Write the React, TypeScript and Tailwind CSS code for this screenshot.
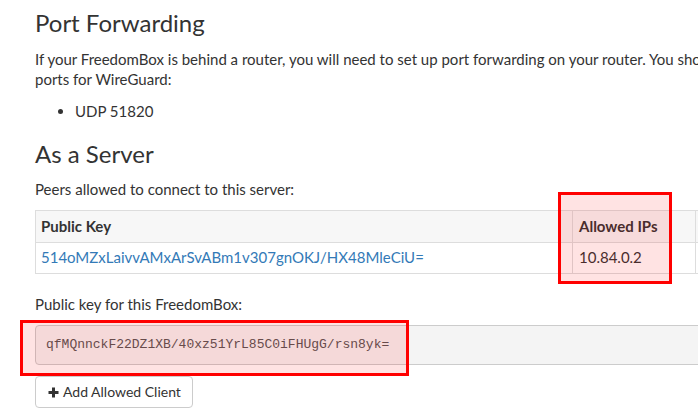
export default function App() {
  return (
    <div className="relative w-[698px] h-[419px] overflow-hidden bg-white text-[#333] font-['Lato','Liberation_Sans',sans-serif] text-[15px] leading-5">
      <div className="w-[1100px] pl-[35px]">
        {/* Port forwarding */}
        <h2 className="mt-[10px] text-[24px] leading-[26px] font-normal">Port Forwarding</h2>
        <p className="mt-[13px] whitespace-nowrap">
          If your FreedomBox is behind a router, you will need to set up port forwarding on your router. You should forward the following
          <br />
          ports for WireGuard:
        </p>
        <ul className="mt-[12px] pl-[40px] list-disc">
          <li>UDP 51820</li>
        </ul>

        {/* Server */}
        <h2 className="mt-[20px] text-[24px] leading-[26px] font-normal">As a Server</h2>
        <p className="mt-[12px]">Peers allowed to connect to this server:</p>
        <table className="mt-[11px] border-collapse border border-[#ddd] w-[900px] table-fixed">
          <thead>
            <tr className="bg-[#f7f7f7]">
              <th className="w-[537px] border border-[#ddd] text-left font-bold pl-[5px] pt-[5px] pb-[6px]">Public Key</th>
              <th className="w-[123px] border border-[#ddd] text-left font-bold pl-[6px] pt-[5px] pb-[6px]">Allowed IPs</th>
              <th className="border border-[#ddd] text-left font-bold pl-[6px] pt-[5px] pb-[6px]">Last Connected Time</th>
            </tr>
          </thead>
          <tbody>
            <tr>
              <td className="border border-[#ddd] pl-[5px] pt-[4px] pb-[6px]">
                <a href="#" className="text-[#337ab7]">514oMZxLaivvAMxArSvABm1v307gnOKJ/HX48MleCiU=</a>
              </td>
              <td className="border border-[#ddd] pl-[6px] pt-[4px] pb-[6px]">10.84.0.2</td>
              <td className="border border-[#ddd] pl-[6px] pt-[4px] pb-[6px]"></td>
            </tr>
          </tbody>
        </table>

        <p className="mt-[20px]">Public key for this FreedomBox:</p>
        <div className="mt-[11px] h-[40px] w-[900px] flex items-center rounded-[4px] border border-[#ccc] bg-[#f4f4f4] pl-[10px] font-['Liberation_Mono',monospace] text-[13px] text-[#555]">
          qfMQnnckF22DZ1XB/40xz51YrL85C0iFHUgG/rsn8yk=
        </div>

        <button className="mt-[11px] h-[32px] w-[158px] flex items-center gap-[4px] pl-[12px] rounded-[4px] border border-[#ccc] bg-white text-[#333] text-[14px]">
          <svg width="11" height="11" viewBox="0 0 11 11" className="shrink-0">
            <path d="M5.5 0.5V10.5M0.5 5.5H10.5" stroke="#333" strokeWidth="3" />
          </svg>
          <span>Add Allowed Client</span>
        </button>
      </div>

      {/* Highlight annotations */}
      <div className="absolute left-[558px] top-[192px] w-[114px] h-[92px] border-[3px] border-[#ff0000] bg-[rgba(255,0,0,0.11)]" />
      <div className="absolute left-[20px] top-[320px] w-[389px] h-[56px] border-[3px] border-[#ff0000] bg-[rgba(255,0,0,0.11)]" />
    </div>
  );
}
